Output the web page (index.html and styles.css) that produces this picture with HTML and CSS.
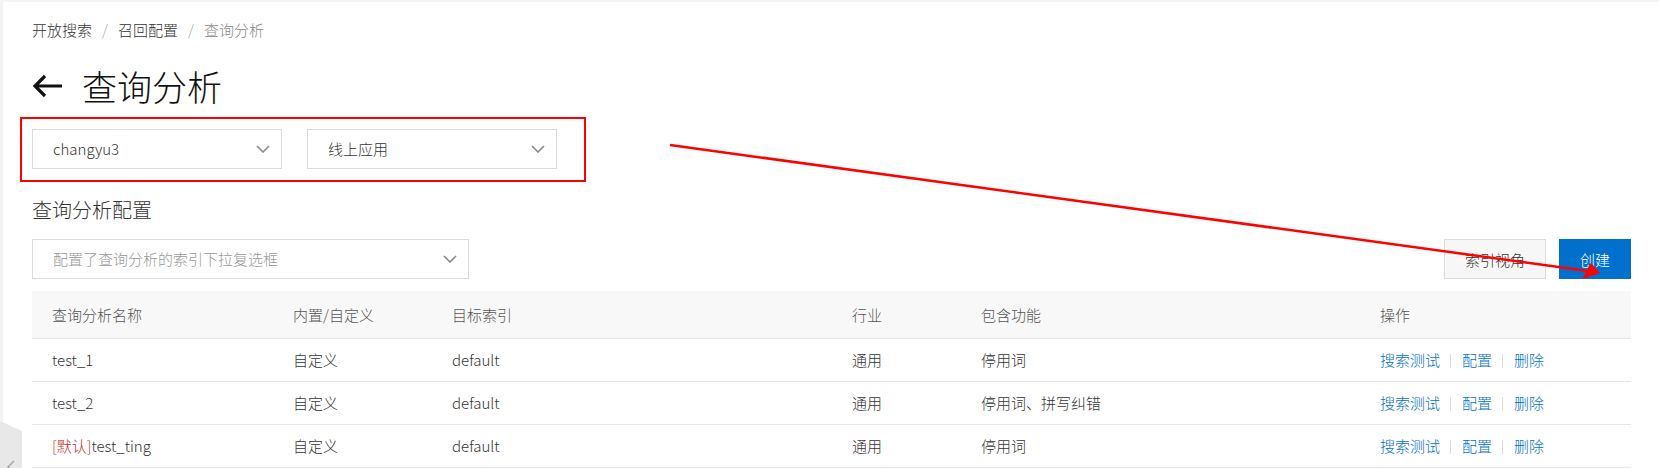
FILE: index.html
```html
<!DOCTYPE html>
<html lang="zh-CN">
<head>
<meta charset="utf-8">
<title>查询分析</title>
<link rel="stylesheet" href="styles.css">
</head>
<body>
<div class="app">
  <div class="edge"></div>
  <main class="main">
    <nav class="breadcrumb">
      <span class="crumb">开放搜索</span><span class="sep">/</span><span class="crumb">召回配置</span><span class="sep">/</span><span class="crumb current">查询分析</span>
    </nav>
    <div class="title-row">
      <svg class="back" width="31" height="24" viewBox="0 0 31 24"><path d="M30 12H3M13 2L3 12L13 22" fill="none" stroke="#111" stroke-width="3.2"/></svg>
      <h1 class="title">查询分析</h1>
    </div>
    <div class="filters">
      <div class="select"><span class="select-text">changyu3</span><svg class="chev" width="14" height="8" viewBox="0 0 14 8"><path d="M1 1L7 7L13 1" fill="none" stroke="#888" stroke-width="1.6"/></svg></div>
      <div class="select"><span class="select-text">线上应用</span><svg class="chev" width="14" height="8" viewBox="0 0 14 8"><path d="M1 1L7 7L13 1" fill="none" stroke="#888" stroke-width="1.6"/></svg></div>
      <div class="mark-box"></div>
    </div>
    <h2 class="section-title">查询分析配置</h2>
    <div class="toolbar">
      <div class="select wide"><span class="select-text placeholder">配置了查询分析的索引下拉复选框</span><svg class="chev" width="14" height="8" viewBox="0 0 14 8"><path d="M1 1L7 7L13 1" fill="none" stroke="#888" stroke-width="1.6"/></svg></div>
      <div class="actions">
        <button class="btn">索引视角</button>
        <button class="btn primary">创建</button>
      </div>
    </div>
    <table class="grid">
      <colgroup>
        <col class="c1"><col class="c2"><col class="c3"><col class="c4"><col class="c5"><col class="c6">
      </colgroup>
      <thead>
        <tr><th>查询分析名称</th><th>内置/自定义</th><th>目标索引</th><th>行业</th><th>包含功能</th><th>操作</th></tr>
      </thead>
      <tbody>
        <tr><td>test_1</td><td>自定义</td><td>default</td><td>通用</td><td>停用词</td><td><a class="link">搜索测试</a><span class="bar"></span><a class="link">配置</a><span class="bar"></span><a class="link">删除</a></td></tr>
        <tr><td>test_2</td><td>自定义</td><td>default</td><td>通用</td><td>停用词、拼写纠错</td><td><a class="link">搜索测试</a><span class="bar"></span><a class="link">配置</a><span class="bar"></span><a class="link">删除</a></td></tr>
        <tr><td><span class="tag">[默认]</span>test_ting</td><td>自定义</td><td>default</td><td>通用</td><td>停用词</td><td><a class="link">搜索测试</a><span class="bar"></span><a class="link">配置</a><span class="bar"></span><a class="link">删除</a></td></tr>
      </tbody>
    </table>
  </main>
  <div class="collapse-tab"><svg width="10" height="14" viewBox="0 0 10 14"><path d="M8 1L2 7L8 13" fill="none" stroke="#a8a8a8" stroke-width="1.5"/></svg></div>
  <svg class="annot" width="1659" height="468" viewBox="0 0 1659 468">
    <line x1="670" y1="145" x2="1588" y2="271" stroke="#f00" stroke-width="2.5"/>
    <polygon points="1600,273 1582,279 1591,263" fill="#f00"/>
  </svg>
</div>
</body>
</html>
```
FILE: styles.css
```css
* { box-sizing: border-box; }
html, body { margin: 0; padding: 0; background: #fff; }
body {
  font-family: "Noto Sans CJK SC", sans-serif;
  font-size: 15px;
  font-weight: 300;
  color: #333;
  width: 1659px;
  height: 468px;
  overflow: hidden;
}
.app {
  position: relative;
  display: flex;
  height: 468px;
}
.edge {
  width: 3px;
  flex: none;
  background: #f3f3f3;
}
.main {
  flex: 1;
  border-top: 2px solid #f5f5f5;
  padding: 17px 28px 0 29px;
}
.breadcrumb {
  height: 21px;
  line-height: 21px;
  font-size: 15px;
  display: flex;
}
.crumb { color: #333; }
.crumb.current { color: #888; }
.sep { color: #aaa; margin: 0 10px; }
.title-row {
  margin-top: 26px;
  height: 40px;
  display: flex;
  align-items: center;
}
.back { flex: none; margin-right: 19px; }
.title {
  margin: 0;
  font-size: 35px;
  font-weight: 300;
  line-height: 40px;
  color: #111;
}
.filters {
  position: relative;
  margin-top: 23px;
  display: flex;
  gap: 25px;
}
.select {
  width: 250px;
  height: 40px;
  border: 1px solid #dcdcdc;
  display: flex;
  align-items: center;
  justify-content: space-between;
  padding: 0 11px 0 20px;
  background: #fff;
}
.select.wide { width: 437px; }
.select-text { color: #333; line-height: 20px; }
.placeholder { color: #999; }
.chev { flex: none; }
.mark-box {
  position: absolute;
  left: -12px;
  top: -12px;
  width: 566px;
  height: 65px;
  border: 2px solid #f00;
}
.section-title {
  margin: 27px 0 0;
  font-size: 20px;
  font-weight: 300;
  line-height: 28px;
  color: #333;
}
.toolbar {
  margin-top: 15px;
  display: flex;
  justify-content: space-between;
  align-items: center;
}
.actions { display: flex; gap: 13px; }
.btn {
  height: 40px;
  padding: 0 20px;
  font-family: inherit;
  font-size: 15px;
  font-weight: 300;
  border: 1px solid #dcdcdc;
  background: #f7f7f7;
  color: #333;
}
.btn.primary {
  background: #0070cc;
  border-color: #0070cc;
  color: #fff;
}
.grid {
  margin-top: 12px;
  width: 1599px;
  border-collapse: collapse;
  table-layout: fixed;
}
.c1 { width: 241px; }
.c2 { width: 159px; }
.c3 { width: 400px; }
.c4 { width: 129px; }
.c5 { width: 399px; }
.c6 { width: 271px; }
.grid th {
  height: 47px;
  background: #f8f8f8;
  color: #555;
  font-weight: 300;
  text-align: left;
  padding: 0 20px;
  border-bottom: 1px solid #e6e6e6;
}
.grid td {
  height: 43px;
  padding: 0 20px;
  border-bottom: 1px solid #e6e6e6;
  color: #333;
  white-space: nowrap;
}
.tag { color: #c4302b; }
.link { color: #0070cc; cursor: pointer; }
.bar {
  display: inline-block;
  width: 1px;
  height: 14px;
  background: #ddd;
  margin: 0 11px 0 10px;
  vertical-align: -2px;
}
.collapse-tab {
  position: absolute;
  left: 0;
  top: 421px;
  width: 22px;
  height: 47px;
  background: #e8e8e8;
  clip-path: polygon(0 0, 100% 10px, 100% 100%, 0 100%);
  display: flex;
  align-items: flex-end;
  justify-content: center;
}
.collapse-tab svg { margin-bottom: -6px; }
.annot {
  position: absolute;
  left: 0;
  top: 0;
  pointer-events: none;
}
```
